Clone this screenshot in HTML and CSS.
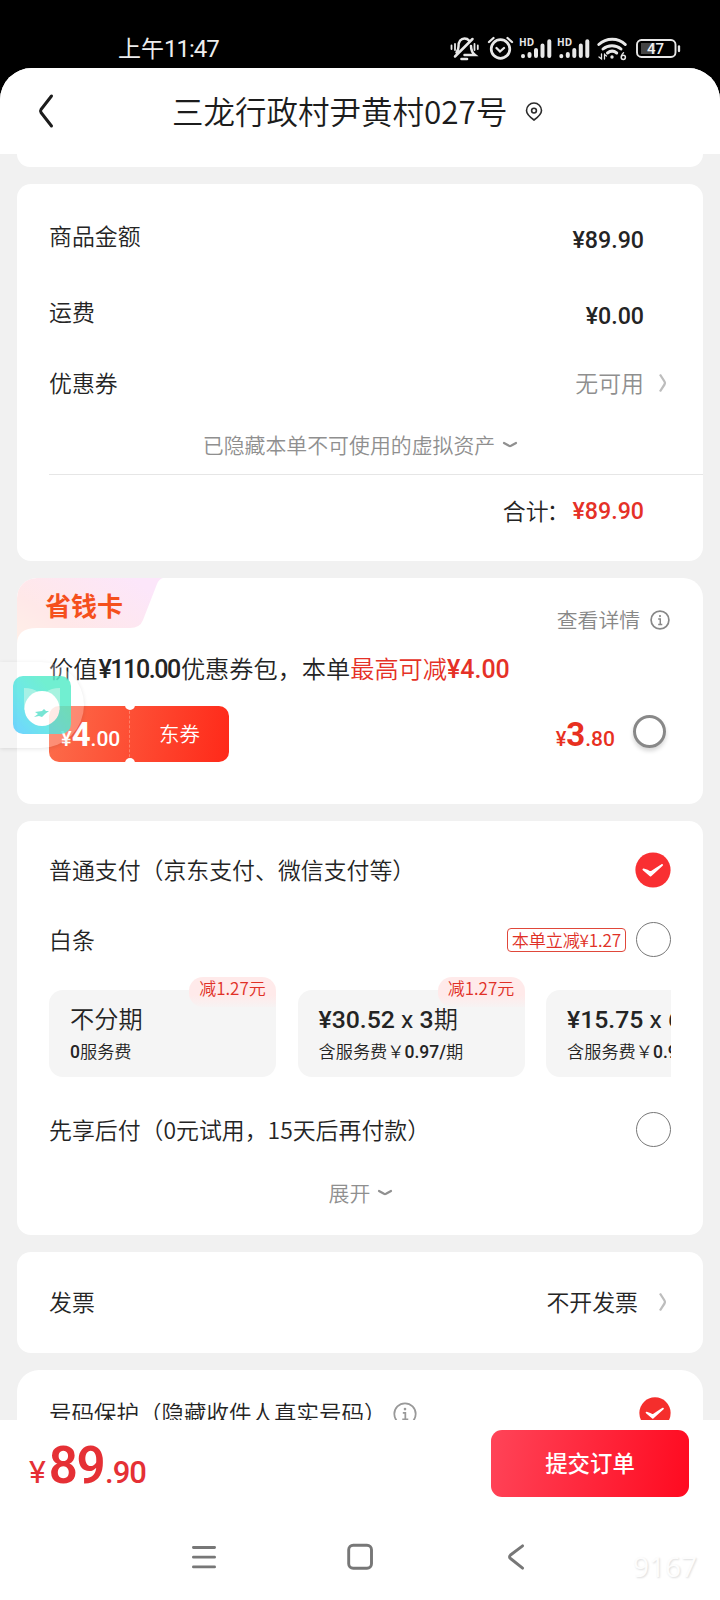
FILE: index.html
```html
<!DOCTYPE html>
<html lang="zh-CN">
<head>
<meta charset="utf-8">
<title>确认订单</title>
<link rel="stylesheet" href="styles.css">
</head>
<body>
<div class="phone">
  <header class="status">
    <span class="status-time">上午<span class="status-num">11:47</span></span>
    <svg class="status-icons" width="236" height="30" viewBox="448 34 236 30" fill="none" stroke="#e8e8e8" stroke-width="2" stroke-linecap="round">
      <path d="M456.500 52.500c1.500-2 2-3.500 2-6 0-5 2.500-8 6-8 2 0 3.500.8 4.500 2M464.500 55h10.500c-2.500-2-4-4.500-4-9M455 56.500l17.500-17.500" stroke-width="2.500"/>
      <path d="M461.500 59h5.500" stroke-width="2.600"/>
      <path d="M455 44v6M451.500 45.500v3.500M474.500 44v6M477.800 45.500v3.500" stroke-width="1.800"/>
      <circle cx="500.500" cy="49" r="9.300" stroke-width="2.700"/>
      <path d="M496.500 48l3.500 3.500 4-3.500M489 42l4.500-4M507.500 38l4.500 4" stroke-width="2.300"/>
      <text class="hd" x="519" y="45.500">HD</text>
      <text class="hd" x="557" y="45.500">HD</text>
      <g stroke-width="4"><path d="M523 56v.2M529.500 54v2M536 50v6M542.500 45.500v10.500M549.300 41.300v14.700"/>
      <path d="M561.300 56v.2M567.800 54v2M574.300 50v6M580.800 45.500v10.500M587.300 41.300v14.700"/></g>
      <path d="M598.800 44.500c7.500-7 19.500-7 26.500 0M603 49c5-4.500 13-4.500 18 0M607.500 53c2.800-2.200 6.500-2.200 9.200 0" stroke-width="3"/>
      <circle cx="612" cy="57" r="1.700" fill="#e8e8e8" stroke="none"/>
      <path d="M601.500 54v5l-2.500-2M604.500 59v-5M604.500 54.500l2 1.500" stroke-width="1.300"/>
      <circle cx="623.300" cy="57.300" r="2.100" stroke-width="1.500"/><path d="M621.500 56c.3-1.500 1-2.500 2-3.300" stroke-width="1.400"/>
      <rect x="637" y="40" width="38.500" height="17" rx="4.500" stroke-width="1.900"/>
      <path d="M641 43h14v11h-14z" fill="#444" stroke="none"/>
      <path d="M679 46.500v4.500" stroke-width="2.300"/>
      <text class="battery" x="655.500" y="54">47</text>
    </svg>
  </header>

  <div class="app">
    <div class="topbar">
      <svg class="back" width="18" height="36" viewBox="0 0 18 36" fill="none" stroke="#1c1c1c" stroke-width="3" stroke-linecap="round" stroke-linejoin="round"><path d="M14.500 3L4 16.500Q3 18 4 19.500L14.500 33"/></svg>
      <h1 class="address">三龙行政村尹黄村027号</h1>
      <svg class="pin" width="18" height="20" viewBox="0 0 18 20" fill="none" stroke="#2b2b2b" stroke-width="1.600"><path d="M9 18C5.500 15.500 1.500 12.500 1.500 8.500a7.500 7.500 0 0 1 15 0C16.500 12.500 12.500 15.500 9 18z"/><circle cx="9" cy="8.600" r="2.400"/></svg>
    </div>

    <main class="scroll">
      <section class="card card-stub"></section>

      <section class="card amounts">
        <div class="row tall"><span>商品金额</span><span class="num amount">¥89.90</span></div>
        <div class="row tall"><span>运费</span><span class="num amount">¥0.00</span></div>
        <div class="row short"><span>优惠券</span><span class="muted coupon-none">无可用</span>
          <svg class="arrow" width="9" height="20" viewBox="0 0 9 20" fill="none" stroke="#bdbdbd" stroke-width="2.300"><path d="M2 1.500L6.500 8.500Q7.500 10 6.500 11.500L2 18.500"/></svg></div>
        <div class="fold hidden-assets"><span>已隐藏本单不可使用的虚拟资产</span><svg width="16" height="8" viewBox="0 0 16 8" fill="none" stroke="#909090" stroke-width="2.200" stroke-linecap="round" stroke-linejoin="round"><path d="M2 2L7 4.800Q8 5.300 9 4.800L14 2"/></svg></div>
        <div class="total"><span>合计<span class="colon">：</span></span><span class="num red">¥89.90</span></div>
      </section>

      <section class="card saver">
        <div class="saver-head">
          <svg class="saver-tab" width="150" height="66" viewBox="0 0 150 66"><defs><linearGradient id="tab" x1="0" y1="1" x2="1" y2="0.300"><stop offset="0" stop-color="#fff0e8"/><stop offset=".35" stop-color="#ffe8e8"/><stop offset="1" stop-color="#fce6fa"/></linearGradient></defs><path d="M0 66V20Q0 0 20 0H146Q142 1 140 6L126 42Q123 50 113 50H20Q0 50 0 66z" fill="url(#tab)"/></svg>
          <span class="saver-name">省钱卡</span>
          <span class="detail">查看详情</span>
          <svg class="info" width="20" height="20" viewBox="0 0 22 22" fill="none" stroke="#888" stroke-width="1.900"><circle cx="11" cy="11" r="9.800"/><path d="M9 10h2.300v5.500M9 16h4.500" stroke-width="1.600"/><circle cx="11" cy="6.700" r="1.200" fill="#888" stroke="none"/></svg>
        </div>
        <div class="saver-line"><span>价值</span><span class="num tight">¥110.00</span><span>优惠券包，本单</span><span class="red">最高可减</span><span class="num red">¥4.00</span></div>
        <div class="saver-buy">
          <div class="ticket">
            <div class="ticket-price price"><small>¥</small><b>4</b><i>.00</i></div>
            <div class="ticket-name">东券</div>
          </div>
          <div class="price saver-price"><small>¥</small><b>3</b><i>.80</i></div>
          <span class="ring"></span>
        </div>
      </section>

      <section class="card pay">
        <div class="row pay-row"><span>普通支付（京东支付、微信支付等）</span>
          <svg width="36" height="36" viewBox="0 0 36 36"><circle cx="18" cy="18" r="17.600" fill="#f92f32"/><path d="M8.500 17.500L15.500 23.500 27 13Q20 17.500 15.500 20.500 12.500 18.500 8.500 17.500z" fill="#fff" stroke="#fff" stroke-width="2" stroke-linejoin="round"/></svg></div>
        <div class="row pay-row"><span>白条</span><span class="tag">本单立减¥1.27</span><span class="radio"></span></div>
        <div class="plans">
          <div class="plan"><em class="badge">减1.27元</em><div class="plan-main">不分期</div><div class="plan-sub"><span class="num">0</span>服务费</div></div>
          <div class="plan"><em class="badge">减1.27元</em><div class="plan-main"><span class="num">¥30.52 <span class="times">x</span> 3</span>期</div><div class="plan-sub">含服务费￥<span class="num">0.97/</span>期</div></div>
          <div class="plan"><div class="plan-main"><span class="num">¥15.75 <span class="times">x</span> 6</span>期</div><div class="plan-sub">含服务费￥<span class="num">0.97/</span>期</div></div>
        </div>
        <div class="row pay-later"><span>先享后付（0元试用，15天后再付款）</span><span class="radio"></span></div>
        <div class="fold expand"><span>展开</span><svg width="16" height="8" viewBox="0 0 16 8" fill="none" stroke="#909090" stroke-width="2.200" stroke-linecap="round" stroke-linejoin="round"><path d="M2 2L7 4.800Q8 5.300 9 4.800L14 2"/></svg></div>
      </section>

      <section class="card invoice">
        <div class="row"><span>发票</span><span class="invoice-none">不开发票</span>
          <svg class="arrow" width="9" height="20" viewBox="0 0 9 20" fill="none" stroke="#bdbdbd" stroke-width="2.300"><path d="M2 1.500L6.500 8.500Q7.500 10 6.500 11.500L2 18.500"/></svg></div>
      </section>

      <section class="card protect">
        <div class="protect-row"><span>号码保护（隐藏收件人真实号码）</span>
          <svg class="protect-info" width="24" height="24" viewBox="0 0 22 22" fill="none" stroke="#999" stroke-width="1.600"><circle cx="11" cy="11" r="9.800"/><path d="M9 10h2.300v6M8.500 16h5.500"/><circle cx="11" cy="6.500" r="1.200" fill="#999" stroke="none"/></svg>
          <svg width="32" height="32" viewBox="0 0 36 36"><circle cx="18" cy="18" r="17.600" fill="#f52e2c"/><path d="M8.500 17.500L15.500 23.500 27 13Q20 17.500 15.500 20.500 12.500 18.500 8.500 17.500z" fill="#fff" stroke="#fff" stroke-width="2" stroke-linejoin="round"/></svg></div>
      </section>
    </main>

    <footer class="submit-bar">
      <div class="grand"><small>¥</small><b>89</b><i>.90</i></div>
      <button class="submit">提交订单</button>
    </footer>
    <nav class="sysnav">
      <svg width="26" height="26" viewBox="0 0 26 26" stroke="#777" stroke-width="2.800" stroke-linecap="round"><path d="M2.400 3.500h21.200M2.400 13.200h21.200M2.400 22.900h21.200"/></svg>
      <svg class="home" width="28" height="28" viewBox="0 0 28 28" fill="none" stroke="#777" stroke-width="2.900"><rect x="2.700" y="2.200" width="22.800" height="23" rx="4.500"/></svg>
      <svg width="18" height="28" viewBox="0 0 18 28" fill="none" stroke="#777" stroke-width="2.900" stroke-linecap="round" stroke-linejoin="round"><path d="M15.600 2.800L3.500 12Q1.500 14 3.500 15.500L15.600 25.200"/></svg>
    </nav>
  </div>

  <div class="floater">
    <svg width="58" height="58" viewBox="0 0 58 58"><defs><linearGradient id="cat" x1="0" y1=".9" x2=".7" y2=".3"><stop offset="0" stop-color="#50ccff"/><stop offset=".5" stop-color="#4fe3e3"/><stop offset="1" stop-color="#52ecc8"/></linearGradient></defs>
      <rect width="58" height="58" rx="10" fill="url(#cat)"/>
      <path d="M11 12q9 0 14 4h8q5-4 14-4v22H11z" fill="#b9f5e4" opacity=".65"/>
      <circle cx="29" cy="32.500" r="17.500" fill="#fff"/>
      <path d="M21 41l4-3-3-2 7-1 2-2 2 2 3 0-4 3-3 3-3-1z" fill="#5ae0cb"/></svg>
  </div>
  <div class="watermark">9167</div>
</div>
</body>
</html>
```

FILE: styles.css
```css
* { box-sizing: border-box; }
body {
  margin: 0;
  background: #fff;
  font-family: "Noto Sans CJK SC", sans-serif;
  font-weight: 350;
  color: #242424;
}
svg { display: block; flex: none; }
small, b, i, em { font-style: normal; font-weight: inherit; font-size: inherit; }
.phone {
  position: relative;
  width: 720px;
  height: 1600px;
  overflow: hidden;
  background: #000;
  display: flex;
  flex-direction: column;
  white-space: nowrap;
}
.num { font-family: Roboto, sans-serif; font-weight: 500; line-height: 1; }
.red { color: #e53127; }
.muted { color: #8f8f8f; }

.status {
  height: 68px;
  flex: none;
  display: flex;
  justify-content: space-between;
  padding: 34px 36px 0 118px;
  color: #ededed;
}
.status-time { font-size: 23px; font-weight: 400; line-height: 27px; }
.status-num { font-family: Roboto, sans-serif; font-size: 24px; letter-spacing: -1px; }
.hd { font: 700 10px "Open Sans", sans-serif; fill: #e8e8e8; stroke: none; }
.battery { font: 500 15px Roboto, sans-serif; fill: #f0f0f0; stroke: none; text-anchor: middle; }

.app {
  flex: 1;
  min-height: 0;
  display: flex;
  flex-direction: column;
  background: #f1f1f1;
  border-radius: 32px 32px 0 0;
  overflow: hidden;
}
.topbar {
  height: 86px;
  flex: none;
  display: flex;
  align-items: center;
  padding: 0 0 0 37px;
  background: #fff;
}
.address {
  margin: -3px 0 0 117px;
  font-size: 31.500px;
  line-height: 44px;
  font-weight: 350;
  color: #1c1c1c;
}
.pin { margin: 2px 0 0 18px; }

.scroll { flex: none; height: 1266px; overflow: hidden; }
.card {
  margin: 0 17px 17px;
  background: #fff;
  border-radius: 14px;
  overflow: hidden;
}
.card-stub { height: 13px; border-radius: 0 0 14px 14px; }
.row {
  display: flex;
  align-items: center;
  padding: 0 32px;
  font-size: 22.900px;
  line-height: 32px;
}
.row > :first-child { margin-right: auto; }

.amounts { height: 377px; padding-top: 13px; }
.tall { height: 76px; }
.short { height: 66px; }
.amount { margin-right: 27px; padding-top: 11px; font-size: 23.200px; }
.coupon-none { margin-right: 14px; }
.arrow { margin: 1px 4px 0 0; }
.fold {
  display: flex;
  align-items: center;
  justify-content: center;
  gap: 7px;
  font-size: 20.900px;
  color: #8f8f8f;
}
.fold svg { margin-top: 3px; }
.hidden-assets { height: 57px; margin-bottom: 2px; padding-left: 1px; }
.total {
  margin-left: 32px;
  height: 74px;
  display: flex;
  align-items: center;
  justify-content: flex-end;
  padding: 0 59px 3px 0;
  border-top: 1px solid #e6e6e6;
  font-size: 22.900px;
}
.total .num { font-size: 23.200px; padding-top: 4px; }
.colon { margin: 0 3px 0 -2px; }

.saver { height: 226px; border-radius: 20px 20px 14px 14px; }
.saver-head {
  position: relative;
  height: 66px;
  display: flex;
  padding: 0 33px 0 28px;
}
.saver-tab { position: absolute; left: 0; top: 0; }
.saver-name {
  position: relative;
  margin-right: auto;
  font-size: 26px;
  line-height: 54px;
  font-weight: 700;
  color: #f5501d;
}
.detail { margin: 26px 10px 0 0; font-size: 20.800px; line-height: 30px; color: #888; }
.info { margin-top: 32px; }
.saver-line {
  display: flex;
  align-items: center;
  height: 48px;
  padding-left: 32px;
  font-size: 24.200px;
  line-height: 48px;
}
.saver-line .num { font-size: 25px; padding-top: 3px; }
.saver-line .tight { letter-spacing: -1.400px; margin: 0 1px; }
.saver-buy { display: flex; height: 56px; margin: 14px 37px 0 32px; }
.ticket {
  position: relative;
  width: 180px;
  height: 56px;
  display: flex;
  color: #fff;
  border-radius: 10px;
  background: linear-gradient(100deg, #fc6d4b, #ff2919);
  overflow: hidden;
}
.ticket::before, .ticket::after {
  content: "";
  position: absolute;
  left: 76px;
  width: 10px;
  height: 10px;
  border-radius: 50%;
  background: #fff;
}
.ticket::before { top: -6px; }
.ticket::after { bottom: -6px; }
.price { font-family: Roboto, sans-serif; line-height: 58px; }
.price small { font-size: 20px; font-weight: 500; }
.price b { font-size: 33px; font-weight: 700; }
.price i { font-size: 21px; font-weight: 500; }
.ticket-price { width: 81px; padding-left: 12px; border-right: 1px dashed #ff8068; }
.ticket-name { flex: 1; text-align: center; font-size: 20.500px; line-height: 54px; }
.saver-price { margin-left: auto; color: #e8301f; }
.ring {
  width: 33px;
  height: 33px;
  margin: 9px 0 0 18px;
  border: 3px solid #888;
  border-radius: 50%;
  box-shadow: 0 3px 4px rgba(0, 0, 0, .16);
}

.pay { height: 414px; padding-top: 15px; }
.pay-row { height: 69.500px; padding-bottom: 1px; }
.pay-row > :first-child { position: relative; top: -1px; }
.radio {
  width: 35px;
  height: 35px;
  border: 1px solid #777;
  border-radius: 50%;
}
.tag {
  margin-right: 10px;
  height: 24px;
  padding: 0 4px;
  border: 1px solid #e0473a;
  border-radius: 4px;
  font-size: 17.200px;
  letter-spacing: -.200px;
  line-height: 21px;
  color: #e03026;
}
.plans {
  display: flex;
  gap: 21.500px;
  margin: 0 32px;
  padding-top: 15px;
  overflow: hidden;
}
.plan {
  position: relative;
  flex: none;
  width: 227px;
  height: 87px;
  padding: 11px 0 0 21px;
  border-radius: 14px;
  background: #f5f5f5;
}
.badge {
  position: absolute;
  right: 0;
  top: -13px;
  width: 87px;
  height: 30px;
  border-radius: 14px 14px 0 14px;
  background: linear-gradient(#ffeaea 60%, #f7f3f3);
  font-size: 17px;
  line-height: 22px;
  text-align: center;
  color: #e03026;
}
.plan-main { height: 34px; font-size: 24.200px; line-height: 34px; }
.plan-main .num { font-size: 24.800px; }
.times { font-weight: 400; }
.plan-sub { height: 28px; font-size: 17.200px; line-height: 31px; }
.plan-sub .num { font-size: 17.500px; }
.pay-later { height: 104px; margin-bottom: 2px; }
.expand { height: 17px; margin-left: 2px; }

.invoice { height: 101px; }
.invoice .row { height: 98px; }
.invoice-none { margin-right: 20px; }

.protect { height: 90px; border-radius: 22px 22px 0 0; margin-bottom: 0; }
.protect-row {
  display: flex;
  align-items: center;
  height: 86px;
  padding: 0 32px;
  font-size: 22.500px;
}
.protect-row > span { margin-top: -2px; }
.protect-info { margin: 2px auto 0 6px; }

.submit-bar {
  height: 90px;
  flex: none;
  display: flex;
  justify-content: space-between;
  padding: 10px 31px 0 29px;
  background: #fff;
}
.grand { font-family: Roboto, sans-serif; line-height: 71px; color: #e53035; }
.grand small { font-size: 32px; font-weight: 400; }
.grand b { font-size: 51px; font-weight: 600; letter-spacing: -1.500px; margin: 0 1px 0 3px; }
.grand i { font-size: 31px; font-weight: 500; letter-spacing: -1px; }
.submit {
  width: 198px;
  height: 67px;
  padding: 0 0 3px;
  border: 0;
  border-radius: 11px;
  background: linear-gradient(100deg, #ff4458, #ff0a20);
  font: 500 22.400px "Noto Sans CJK SC", sans-serif;
  color: #fff;
}
.sysnav {
  flex: 1;
  display: flex;
  align-items: center;
  justify-content: space-between;
  padding: 4px 195px 0 191px;
  background: #fff;
}
.home { margin-right: 4px; }

.floater {
  position: absolute;
  left: 0;
  top: 662px;
  width: 84px;
  height: 86px;
  padding: 14px 13px;
  border-radius: 0 43px 43px 0;
  background: rgba(255, 255, 255, .25);
  box-shadow: 0 1px 4px rgba(0, 0, 0, .1);
}
.floater svg { opacity: .82; }
.watermark {
  position: absolute;
  right: 23px;
  bottom: 17px;
  font: 400 28px/34px "Open Sans", sans-serif;
  color: #fdfdfd;
  text-shadow: 1px 1px 2px #ddd;
}
```
